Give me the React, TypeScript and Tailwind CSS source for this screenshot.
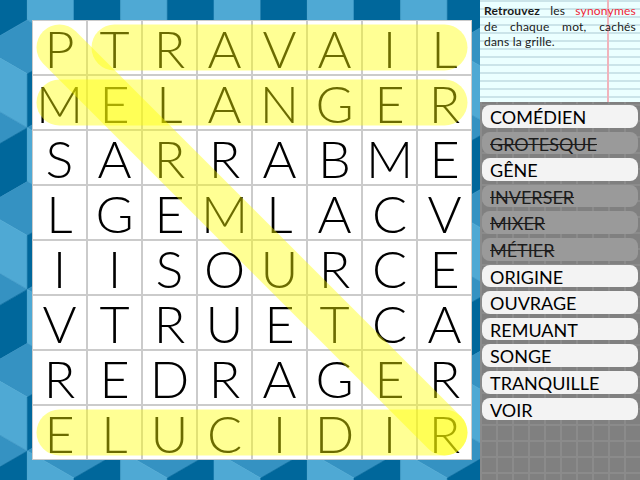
import React from 'react';

// Letters of the grid, row by row
const GRID = [
  'PTRAVAIL',
  'MELANGER',
  'SARRABME',
  'LGEMLACV',
  'IISOURCE',
  'VTRUETCA',
  'REDRAGER',
  'ELUCIDIR',
];

const WORDS = [
  { label: 'COMÉDIEN', found: false },
  { label: 'GROTESQUE', found: true },
  { label: 'GÊNE', found: false },
  { label: 'INVERSER', found: true },
  { label: 'MIXER', found: true },
  { label: 'MÉTIER', found: true },
  { label: 'ORIGINE', found: false },
  { label: 'OUVRAGE', found: false },
  { label: 'REMUANT', found: false },
  { label: 'SONGE', found: false },
  { label: 'TRANQUILLE', found: false },
  { label: 'VOIR', found: false },
];

// Found words: [startCol, startRow, endCol, endRow]
const HIGHLIGHTS: [number, number, number, number][] = [
  [1, 0, 7, 0],
  [0, 1, 7, 1],
  [0, 0, 7, 7],
  [0, 7, 7, 7],
];

const center = (i: number) => 27.5 + i * 55;

// Tumbling blocks background
function CubeBackground() {
  const W = 46.667;
  const S = 53.886;
  const faces: { pts: string; fill: string }[] = [];
  const p = (pts: number[][]) => pts.map(([x, y]) => `${x.toFixed(1)},${y.toFixed(1)}`).join(' ');

  for (let r = -1; r <= 7; r++) {
    const cy = -7 + r * 1.5 * S;
    const off = Math.abs(r) % 2 === 0 ? 74 : 74 - W;
    for (let k = -2; k <= 6; k++) {
      const cx = off + k * 2 * W;
      faces.push({ fill: '#3592c2', pts: p([[cx, cy - S], [cx + W, cy - S / 2], [cx, cy], [cx - W, cy - S / 2]]) });
      faces.push({ fill: '#4fa9d4', pts: p([[cx - W, cy - S / 2], [cx, cy], [cx, cy + S], [cx - W, cy + S / 2]]) });
      faces.push({ fill: '#00679b', pts: p([[cx, cy], [cx + W, cy - S / 2], [cx + W, cy + S / 2], [cx, cy + S]]) });
    }
  }

  return (
    <svg className="absolute inset-0" width="480" height="480" viewBox="0 0 480 480">
      {faces.map((f, i) => (
        <polygon key={i} points={f.pts} fill={f.fill} stroke={f.fill} strokeWidth="0.6" />
      ))}
    </svg>
  );
}

export default function App() {
  return (
    <div className="flex w-[640px] h-[480px] overflow-hidden" style={{ fontFamily: 'Lato, "Open Sans", sans-serif' }}>
      {/* Board */}
      <div className="relative w-[480px] h-[480px] overflow-hidden pl-[32px] pt-[20px]">
        <CubeBackground />
        <div className="relative w-[440px] h-[440px]">
          <div className="grid grid-cols-8 gap-[2px] p-[1px] w-full h-full bg-[#cbcbcb]">
            {GRID.flatMap((row, r) =>
              row.split('').map((ch, c) => (
                <div key={`${r}-${c}`} className="bg-white flex items-center justify-center text-[52px] font-light leading-none text-black">
                  {ch}
                </div>
              ))
            )}
          </div>

          {/* Highlights of found words */}
          <svg className="absolute inset-0 pointer-events-none" width="440" height="440" viewBox="0 0 440 440">
            {HIGHLIGHTS.map(([c1, r1, c2, r2], i) => (
              <line
                key={i}
                x1={center(c1)}
                y1={center(r1)}
                x2={center(c2)}
                y2={center(r2)}
                stroke="#ffff00"
                strokeOpacity="0.42"
                strokeWidth="46"
                strokeLinecap="round"
              />
            ))}
          </svg>
        </div>
      </div>

      {/* Side panel */}
      <div className="w-[160px] h-[480px] flex flex-col bg-[#808080] bg-[linear-gradient(to_right,#8b8b8b_2px,transparent_2px),linear-gradient(to_bottom,#8b8b8b_2px,transparent_2px)] bg-[size:16px_16px] bg-[position:0_8px]">
        {/* Notepad */}
        <div className="h-[102px] px-[4px] pt-[3px] bg-[#ebffff] bg-[linear-gradient(to_right,transparent_127px,#f1b4bc_127px,#f1b4bc_129px,transparent_129px),repeating-linear-gradient(to_bottom,#cbe4e9_0px,#cbe4e9_2px,transparent_2px,transparent_8px)]">
          <p className="text-[12px] leading-[15.5px] text-justify text-[#1a1a1a] tracking-[0.2px]">
            <b>Retrouvez</b> les <span className="text-[#ef2436]">synonymes</span> de chaque mot, cachés dans la grille.
          </p>
        </div>

        {/* Word list */}
        <div className="flex flex-col gap-[4px] pt-[3px] pl-[2px]">
          {WORDS.map(w => (
            <div
              key={w.label}
              className={
                w.found
                  ? 'w-[156px] h-[22.6px] rounded-[8px] bg-[#9a9a9a] pl-[8px] pt-[1px] text-[18px] leading-[22px] text-[#1c1c1c] line-through'
                  : 'w-[156px] h-[22.6px] rounded-[8px] bg-[#f3f3f3] pl-[8px] pt-[1px] text-[18px] leading-[22px] text-black'
              }
            >
              {w.label}
            </div>
          ))}
        </div>
      </div>
    </div>
  );
}
